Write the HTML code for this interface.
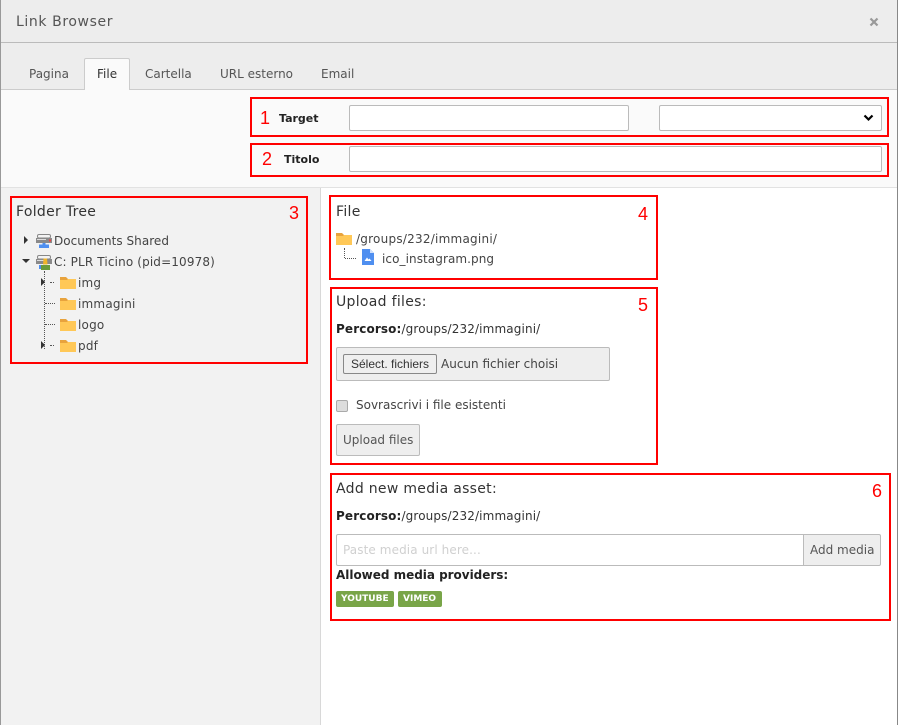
<!DOCTYPE html>
<html><head><meta charset="utf-8"><style>
html,body{margin:0;padding:0;width:898px;height:725px;overflow:hidden;background:#fff}
*{box-sizing:border-box}
body{font-family:"DejaVu Sans","Liberation Sans",sans-serif;font-size:12px;color:#333;position:relative}
.a{position:absolute}
.t{position:absolute;white-space:nowrap;line-height:16px}
.h{font-size:14px;letter-spacing:.3px;color:#333}
.red{position:absolute;border:2px solid #f00}
.n{position:absolute;color:#f00;font-family:"Liberation Sans",sans-serif;font-size:18px;line-height:20px}
.inp{position:absolute;background:#fff;border:1px solid #bbb;border-radius:2px}
.d{position:absolute;border-color:#555;border-style:dotted;border-width:0}
.tri{position:absolute;width:0;height:0}
</style></head><body>
<div class="a" style="left:0;top:0;width:898px;height:42px;background:#ededed"></div>
<div class="a" style="left:0;top:42px;width:898px;height:1px;background:#bbb"></div>
<div class="a" style="left:0;top:43px;width:898px;height:46px;background:#ededed"></div>
<div class="a" style="left:0;top:89px;width:898px;height:1px;background:#ccc"></div>
<div class="a" style="left:0;top:90px;width:898px;height:97px;background:#fafafa"></div>
<div class="a" style="left:0;top:187px;width:898px;height:1px;background:#e2e2e2"></div>
<div class="a" style="left:0;top:188px;width:320px;height:537px;background:#f2f2f2"></div>
<div class="a" style="left:320px;top:188px;width:1px;height:537px;background:#d8d8d8"></div>
<div class="a" style="left:0;top:0;width:1px;height:725px;background:#999"></div>
<div class="a" style="left:897px;top:0;width:1px;height:725px;background:#888"></div>

<div class="t" style="left:16px;top:14px;font-size:14px;color:#555;letter-spacing:.6px">Link Browser</div>
<svg class="a" style="left:869px;top:17px" width="10" height="10"><path d="M1.5 1.5L8.5 8.5M8.5 1.5L1.5 8.5" stroke="#999" stroke-width="2.2"/></svg>

<div class="a" style="left:84px;top:58px;width:46px;height:32px;background:#fafafa;border:1px solid #ccc;border-bottom:0;border-radius:2px 2px 0 0"></div>
<div class="t" style="left:29px;top:66px;color:#555">Pagina</div>
<div class="t" style="left:97px;top:66px;color:#333">File</div>
<div class="t" style="left:145px;top:66px;color:#555">Cartella</div>
<div class="t" style="left:220px;top:66px;color:#555">URL esterno</div>
<div class="t" style="left:321px;top:66px;color:#555">Email</div>

<div class="red" style="left:250px;top:97px;width:639px;height:40px"></div>
<div class="n" style="left:260px;top:108px">1</div>
<div class="t" style="left:279px;top:111px;font-size:11px;font-weight:bold;color:#222">Target</div>
<div class="inp" style="left:349px;top:105px;width:280px;height:26px"></div>
<div class="inp" style="left:659px;top:105px;width:223px;height:26px"></div>
<svg class="a" style="left:863px;top:114px" width="11" height="8"><path d="M1.5 1.5L5.500 5.500L9.500 1.500" fill="none" stroke="#000" stroke-width="2.2"/></svg>

<div class="red" style="left:250px;top:143px;width:639px;height:34px"></div>
<div class="n" style="left:262px;top:149px">2</div>
<div class="t" style="left:284px;top:152px;font-size:11px;font-weight:bold;color:#222">Titolo</div>
<div class="inp" style="left:349px;top:146px;width:533px;height:26px"></div>

<!-- Folder tree -->
<div class="red" style="left:10px;top:196px;width:298px;height:168px"></div>
<div class="n" style="left:289px;top:203px">3</div>
<div class="t h" style="left:16px;top:204px">Folder Tree</div>

<div class="tri" style="left:24px;top:236px;border-left:4px solid #333;border-top:4px solid transparent;border-bottom:4px solid transparent"></div>
<svg class="a" style="left:36px;top:233px" width="17" height="15"><rect x="1.500" y="1.500" width="13" height="3.500" rx="1.500" fill="#f4f4f4" stroke="#888"/><rect x="0" y="5" width="16" height="5" fill="#8a8a8a"/><rect x="1" y="6" width="9" height="1" fill="#ddd"/><rect x="13" y="6.500" width="2" height="2" fill="#e44"/><rect x="6.500" y="10" width="3" height="2" fill="#4f8ff0"/><rect x="3" y="11.500" width="10" height="3.500" fill="#4f8ff0"/></svg>
<div class="t" style="left:54px;top:233px;letter-spacing:.03px;color:#444">Documents Shared</div>

<div class="tri" style="left:22px;top:259px;border-top:4px solid #333;border-left:4px solid transparent;border-right:4px solid transparent"></div>
<svg class="a" style="left:36px;top:254px" width="17" height="17"><rect x="1.500" y="1.500" width="13" height="3.500" rx="1.500" fill="#f4f4f4" stroke="#888"/><rect x="0" y="5" width="16" height="5" fill="#8a8a8a"/><rect x="1" y="6" width="9" height="1" fill="#ddd"/><rect x="3" y="11" width="8" height="4" fill="#4f8ff0"/><path d="M7.500 4.500h3.500l.5 6H7z" fill="#f0b429"/><rect x="5" y="11" width="9" height="5" fill="#6b9a3a"/></svg>
<div class="t" style="left:54px;top:254px;letter-spacing:.14px;color:#444">C: PLR Ticino (pid=10978)</div>

<div class="d" style="left:44px;top:271px;height:78px;border-left-width:1px"></div>
<div class="d" style="left:50px;top:282px;width:4px;border-top-width:1px"></div>
<div class="d" style="left:45px;top:303px;width:10px;border-top-width:1px"></div>
<div class="d" style="left:45px;top:324px;width:10px;border-top-width:1px"></div>
<div class="d" style="left:50px;top:345px;width:4px;border-top-width:1px"></div>
<div class="tri" style="left:41px;top:278px;border-left:4px solid #333;border-top:4px solid transparent;border-bottom:4px solid transparent"></div>
<div class="tri" style="left:41px;top:341px;border-left:4px solid #333;border-top:4px solid transparent;border-bottom:4px solid transparent"></div>

<svg class="a" style="left:60px;top:277px" width="16" height="12"><path d="M0 0h6l2 2h8v10H0z" fill="#e8a33d"/><path d="M0 3h7l1-1h8v10H0z" fill="#ffc857"/></svg>
<div class="t" style="left:78px;top:275px;letter-spacing:.2px;color:#444">img</div>
<svg class="a" style="left:60px;top:298px" width="16" height="12"><path d="M0 0h6l2 2h8v10H0z" fill="#e8a33d"/><path d="M0 3h7l1-1h8v10H0z" fill="#ffc857"/></svg>
<div class="t" style="left:78px;top:296px;letter-spacing:.2px;color:#444">immagini</div>
<svg class="a" style="left:60px;top:319px" width="16" height="12"><path d="M0 0h6l2 2h8v10H0z" fill="#e8a33d"/><path d="M0 3h7l1-1h8v10H0z" fill="#ffc857"/></svg>
<div class="t" style="left:78px;top:317px;letter-spacing:.2px;color:#444">logo</div>
<svg class="a" style="left:60px;top:340px" width="16" height="12"><path d="M0 0h6l2 2h8v10H0z" fill="#e8a33d"/><path d="M0 3h7l1-1h8v10H0z" fill="#ffc857"/></svg>
<div class="t" style="left:78px;top:338px;letter-spacing:.2px;color:#444">pdf</div>

<!-- File -->
<div class="red" style="left:329px;top:195px;width:329px;height:85px"></div>
<div class="n" style="left:638px;top:204px">4</div>
<div class="t h" style="left:336px;top:204px">File</div>
<svg class="a" style="left:336px;top:233px" width="16" height="12"><path d="M0 0h6l2 2h8v10H0z" fill="#e8a33d"/><path d="M0 3h7l1-1h8v10H0z" fill="#ffc857"/></svg>
<div class="t" style="left:356px;top:231px;letter-spacing:.24px;color:#444">/groups/232/immagini/</div>
<div class="d" style="left:344px;top:248px;height:10px;border-left-width:1px"></div>
<div class="d" style="left:345px;top:258px;width:11px;border-top-width:1px"></div>
<svg class="a" style="left:362px;top:249px" width="12" height="16"><path d="M0 0h8l4 4v12H0z" fill="#4f8ff0"/><path d="M8 0l4 4H8z" fill="#cfe0fb"/><path d="M2.500 12L5 8.500 6.500 10.500 7.500 9.500 9.500 12z" fill="#fff"/></svg>
<div class="t" style="left:382px;top:251px;letter-spacing:.08px;color:#444">ico_instagram.png</div>

<!-- Upload -->
<div class="red" style="left:330px;top:287px;width:328px;height:178px"></div>
<div class="n" style="left:638px;top:295px">5</div>
<div class="t h" style="left:336px;top:294px">Upload files:</div>
<div class="t" style="left:336px;top:321px;letter-spacing:.13px;color:#333"><b style="color:#222">Percorso:</b>/groups/232/immagini/</div>
<div class="a" style="left:336px;top:347px;width:274px;height:34px;background:#eee;border:1px solid #bbb;border-radius:2px"></div>
<div class="a" style="left:343px;top:354px;width:94px;height:20px;background:#efefef;border:1px solid #888;border-radius:2px"></div>
<div class="t" style="left:351px;top:356px;font-family:'Liberation Sans',sans-serif;font-size:12px;color:#333">Sélect. fichiers</div>
<div class="t" style="left:441px;top:356px;font-size:12px;color:#444">Aucun fichier choisi</div>
<div class="a" style="left:336px;top:400px;width:12px;height:12px;background:#ddd;border:1px solid #aaa;border-radius:2px"></div>
<div class="t" style="left:356px;top:397px;color:#444;letter-spacing:0">Sovrascrivi i file esistenti</div>
<div class="a" style="left:336px;top:424px;width:84px;height:32px;background:#eee;border:1px solid #bbb;border-radius:2px"></div>
<div class="t" style="left:343px;top:432px;color:#555">Upload files</div>

<!-- Media -->
<div class="red" style="left:330px;top:473px;width:561px;height:148px"></div>
<div class="n" style="left:872px;top:481px">6</div>
<div class="t h" style="left:336px;top:481px">Add new media asset:</div>
<div class="t" style="left:336px;top:508px;letter-spacing:.13px;color:#333"><b style="color:#222">Percorso:</b>/groups/232/immagini/</div>
<div class="inp" style="left:336px;top:534px;width:468px;height:32px;border-radius:2px 0 0 2px"></div>
<div class="t" style="left:343px;top:542px;color:#d0d0d0;letter-spacing:.1px">Paste media url here...</div>
<div class="a" style="left:803px;top:534px;width:78px;height:32px;background:#eee;border:1px solid #bbb;border-radius:0 2px 2px 0"></div>
<div class="t" style="left:810px;top:542px;color:#555">Add media</div>
<div class="t" style="left:336px;top:567px;font-weight:bold;font-size:12px;color:#222;letter-spacing:-.02px">Allowed media providers:</div>
<div class="a" style="left:336px;top:591px;width:58px;height:16px;background:#79a548;border-radius:2px"></div>
<div class="t" style="left:341px;top:591px;font-size:9px;font-weight:bold;color:#fff">YOUTUBE</div>
<div class="a" style="left:398px;top:591px;width:44px;height:16px;background:#79a548;border-radius:2px"></div>
<div class="t" style="left:403px;top:591px;font-size:9px;font-weight:bold;color:#fff">VIMEO</div>
</body></html>
